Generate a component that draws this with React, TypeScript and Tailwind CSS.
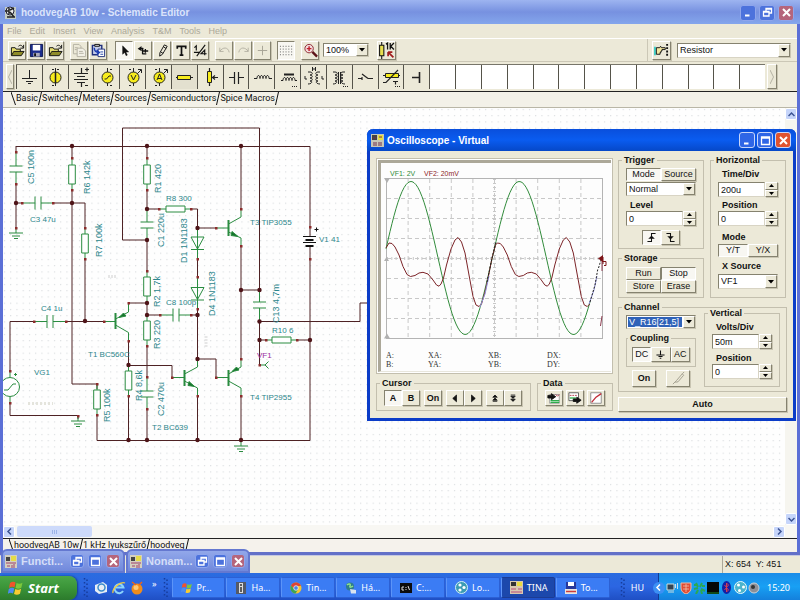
import React from 'react';
import clsx from 'clsx';

const raised =
  'border border-t-white border-l-white border-r-[#85826f] border-b-[#85826f] bg-[#ece9d8] shadow-[1px_1px_0_#c9c5b2]';
const pressed = 'border border-t-[#85826f] border-l-[#85826f] border-r-white border-b-white bg-[#f8f7f2]';
const sunken = 'border border-t-[#85826f] border-l-[#85826f] border-r-[#d8d4c4] border-b-[#d8d4c4] bg-white';

/* ---------- small controls ---------- */

type BtnProps = { label?: string; down?: boolean; className?: string; children: React.ReactNode };

function Btn({ label, down, className, children }: BtnProps) {
  return (
    <button
      type="button"
      aria-label={label}
      className={clsx('flex items-center justify-center overflow-hidden leading-none', down ? pressed : raised, className)}
    >
      {children}
    </button>
  );
}

function Combo({ id, label, value, className, selected }: { id: string; label?: string; value: string; className?: string; selected?: boolean }) {
  return (
    <div className={clsx('flex items-stretch', sunken, className)}>
      <select
        id={id}
        aria-label={label}
        className={clsx('m-px min-w-0 flex-1 appearance-none pl-px leading-none outline-none', selected && 'bg-[#2f62b8] text-white')}
      >
        <option>{value}</option>
      </select>
      <span className={clsx('flex w-3 items-center justify-center', raised)}>
        <svg width="6" height="4" viewBox="0 0 6 4">
          <path d="M0 0h6L3 3.5z" />
        </svg>
      </span>
    </div>
  );
}

function Spin({ id, label, value }: { id: string; label: string; value: string }) {
  return (
    <div className="flex h-[15px]">
      <input id={id} defaultValue={value} className={clsx('min-w-0 flex-1 pl-0.5 leading-none outline-none', sunken)} />
      <div className="flex w-[13px] flex-col">
        <Btn label={`${label} up`} className="min-h-0 flex-1">
          <svg width="5" height="3" viewBox="0 0 5 3"><path d="M0 3h5L2.5 0z" /></svg>
        </Btn>
        <Btn label={`${label} down`} className="min-h-0 flex-1">
          <svg width="5" height="3" viewBox="0 0 5 3"><path d="M0 0h5L2.5 3z" /></svg>
        </Btn>
      </div>
    </div>
  );
}

function Group({ title, className, children }: { title: string; className?: string; children: React.ReactNode }) {
  return (
    <fieldset className={clsx('min-w-0 border border-[#c3bfae]', className)}>
      <legend className="-ml-1 px-0.5 text-[9px] leading-[10px] font-bold">{title}</legend>
      {children}
    </fieldset>
  );
}

function Caption({ htmlFor, className, children }: { htmlFor: string; className?: string; children: React.ReactNode }) {
  return (
    <label htmlFor={htmlFor} className={clsx('block pl-1 leading-[10px] font-bold', className)}>
      {children}
    </label>
  );
}

function WinBtn({ kind, dim, className }: { kind: 'min' | 'max' | 'restore' | 'close'; dim?: boolean; className?: string }) {
  const bg = kind === 'close' ? (dim ? 'bg-[#b5657c]' : 'bg-[#e0532f]') : dim ? 'bg-[#4c72dc]' : 'bg-[#2f66e6]';
  return (
    <button
      type="button"
      aria-label={kind}
      className={clsx('flex items-center justify-center rounded-[3px] border', dim ? 'border-[#8fa6ec]' : 'border-[#c8d6fa]', bg, className)}
    >
      <svg width="11" height="11" viewBox="0 0 11 11" fill="none" stroke="#fff" strokeWidth="1.3">
        {kind === 'min' && <path d="M2 8.500h4.500" strokeWidth="2" />}
        {kind === 'max' && <path d="M1.500 2h8v7.500h-8zM1.500 3h8" />}
        {kind === 'restore' && <path d="M4 4V1.500h5.500V6H7.500M1.500 4.500h5.500v4.500H1.500zM1.500 5h5.500M4 2h5.500" />}
        {kind === 'close' && <path d="M2 2l7 7M9 2l-7 7" strokeWidth="2" />}
      </svg>
    </button>
  );
}

/* ---------- toolbar icons ---------- */

function Icon({ size = 15, children }: { size?: number; children: React.ReactNode }) {
  return (
    <svg width={size} height={size} viewBox="0 0 16 16" fill="none" stroke="#111" strokeWidth="1" className="shrink-0">
      {children}
    </svg>
  );
}

const icons = {
  open: (
    <Icon>
      <path d="M1.500 13V5h4l1 1.500h4.500V9" fill="#e8e070" />
      <path d="M1.500 13.500L4 9h11l-3 4.500z" fill="#8f8c28" />
      <path d="M9 3.500c2-2 4-1 5 1.500M14.500 2v3.500H11" />
    </Icon>
  ),
  save: (
    <Icon>
      <path d="M1.500 1.500h13v13h-13z" fill="#1b2c8c" stroke="#0c1650" />
      <path d="M4 2h8v6H4z" fill="#fff" stroke="none" />
      <path d="M4.500 10.500h7v4h-7z" fill="#aab" stroke="none" />
      <path d="M5.500 11h2v3h-2z" fill="#111" stroke="none" />
    </Icon>
  ),
  copy: (
    <Icon>
      <g stroke="#b3b0a2">
        <path d="M1.500 1.500h6l2 2v8h-8z" />
        <path d="M5.500 5.500h6l3 3v6h-9z" fill="#f2f0e6" />
        <path d="M3 5h3M3 7h2M7.500 9h4M7.500 11h5" />
      </g>
    </Icon>
  ),
  paste: (
    <Icon>
      <path d="M1.500 2.500h10v10h-10z" fill="#c4cce8" stroke="#20307c" strokeWidth="1.500" />
      <path d="M4 1.500h5v2H4z" fill="#ddd" />
      <path d="M7.500 6.500h7v8h-7z" fill="#fff" stroke="#20307c" />
      <path d="M3.500 5c0 3 2 5 5 5M6 7.500L9 10l-3 2.500" stroke="#1c3cb0" strokeWidth="1.500" />
      <path d="M10 9.500h3M10 12h3" stroke="#2244aa" />
    </Icon>
  ),
  arrow: <Icon><path d="M6 3v9l2.200-2 1.500 3.500 1.300-.6-1.500-3.300h3z" fill="#111" strokeWidth=".5" /></Icon>,
  junction: <Icon><path d="M3 6h5M6 4l-3 2 3 2M7 5v7M7 8.500h6M10 6.500v4M7 11.500h4" strokeWidth="1.400" /></Icon>,
  pen: <Icon><path d="M10 2l3 1.500-5 8.500-3 2 .2-3.500zM9 4l3 2M6 9.500l2.500 1.500" /></Icon>,
  text: <Icon><path d="M3.500 6V3.500h9V6M8 3.500v9M6 13h4" strokeWidth="1.800" /></Icon>,
  ratio: <Icon><path d="M1.500 5L3.500 3v5M13 2L4 14M1 10h6M12.500 13V7.500L8.500 11.500h6" strokeWidth="1.200" /></Icon>,
  undo: <Icon><path d="M3 5v4h4M3 9c3-5 9-5 10 1" stroke="#b3b0a2" /></Icon>,
  redo: <Icon><path d="M13 5v4H9M13 9c-3-5-9-5-10 1" stroke="#b3b0a2" /></Icon>,
  plus: <Icon><path d="M8 3v10M3 8h10" stroke="#a5a294" /></Icon>,
  grid: (
    <Icon>
      <path d="M1 3.500h14M1 6.500h14M1 9.500h14M1 12.500h14" strokeDasharray="1 2" stroke="#555" />
    </Icon>
  ),
  zoom: (
    <Icon>
      <circle cx="6.500" cy="6" r="4.500" fill="#f4dcdc" stroke="#8b2630" />
      <path d="M4 6h5M6.500 3.500v5" stroke="#c0202c" strokeWidth="1.500" />
      <path d="M10 9.500l5 5" strokeWidth="2.500" stroke="#5c1218" />
    </Icon>
  ),
  value: (
    <Icon size={17}>
      <path d="M3.500 0v3M3.500 13v3" />
      <path d="M1.500 3h4v10h-4z" fill="#e8e050" />
      <path d="M7.500 2L9 1v6M11.500 1v6M15 1l-3 3 3 3" strokeWidth="1.200" />
      <path d="M9.500 9.500h4M9.500 9.500v4M9.500 9.500l5 5" stroke="#a01c1c" strokeWidth="1.600" />
    </Icon>
  ),
  hand: (
    <Icon>
      <path d="M0 4h2v9H0z" fill="#3fd0c8" stroke="none" />
      <path d="M2.500 5H6l1-1.500 1 1.500h4v2H8.500v1.500h-1V10h-1v2h-4z" fill="#f3e7a0" />
      <path d="M14 1v14" strokeWidth="2" strokeDasharray="2 1.500" />
    </Icon>
  ),
};

const toolGroups: { gap: string; items: { label: string; icon: React.ReactNode; down?: boolean }[] }[] = [
  { gap: '', items: [{ label: 'Open', icon: icons.open }, { label: 'Save', icon: icons.save }, { label: 'Import', icon: icons.open }] },
  { gap: 'ml-1.5', items: [{ label: 'Copy', icon: icons.copy }, { label: 'Paste', icon: icons.paste }] },
  {
    gap: 'ml-2',
    items: [
      { label: 'Select', icon: icons.arrow, down: true },
      { label: 'Last component', icon: icons.junction },
      { label: 'Wire', icon: icons.pen },
      { label: 'Text', icon: icons.text },
      { label: 'Ratio', icon: icons.ratio },
    ],
  },
  { gap: 'ml-1.5', items: [{ label: 'Undo', icon: icons.undo }, { label: 'Redo', icon: icons.redo }, { label: 'Add', icon: icons.plus }] },
  { gap: 'ml-1.5', items: [{ label: 'Grid', icon: icons.grid, down: true }] },
  { gap: 'ml-1.5', items: [{ label: 'Zoom', icon: icons.zoom }] },
];

/* ---------- component palette ---------- */

const yellow = '#f7ec1c';

const parts: { name: string; art: React.ReactNode }[] = [
  { name: 'Ground', art: <path d="M12.500 5v8M5 13.500h15M9 16.500h7M11 18.500h3" /> },
  { name: 'Current source', art: <><path d="M12.500 3v18M9 4.500h2M14 4.500h2M9 20.500h2" /><circle cx="12.500" cy="12.500" r="5.500" fill={yellow} /><path d="M12.500 7v11" strokeWidth="1.500" /></> },
  { name: 'Battery', art: <path d="M12.500 3v5M5 8.500h14M8 11.500h8M5 14.500h14M8 17.500h8M12.500 18v4M16 4.500h4M18 2.500v4M16 20.500h3" strokeWidth="1.200" /> },
  { name: 'Generator', art: <><path d="M12.500 3v18M15 4.500h2M15 20.500h2" /><circle cx="12.500" cy="12.500" r="5.500" fill={yellow} /><path d="M9.500 14h2l2.500-3h2" /></> },
  { name: 'Voltmeter', art: <><path d="M12.500 3v4M12.500 18v3M8 4.500h2M8 20.500h2M16 9l4-4M17 4.500h3.500V8" /><circle cx="12.500" cy="12.500" r="5.500" fill={yellow} /><path d="M10 10l2.500 5 2.500-5" /></> },
  { name: 'Ammeter', art: <><path d="M12.500 3v4M12.500 18v3M8 4.500h2M8 20.500h2M16 9l4-4M17 4.500h3.500V8" /><circle cx="12.500" cy="12.500" r="5.500" fill={yellow} /><path d="M10 15l2.500-6 2.500 6M11 13.500h3" /></> },
  { name: 'Resistor', art: <><path d="M4 12.500h17" /><path d="M5.500 10.500h13v4h-13z" fill={yellow} /></> },
  { name: 'Potentiometer', art: <><path d="M11.500 3v18M15 12.500h5M17 10.500l-2.500 2 2.500 2" strokeWidth="1.200" /><path d="M9.500 6.500h4v11h-4z" fill={yellow} /></> },
  { name: 'Capacitor', art: <path d="M5 12.500h5M14 12.500h6M10.500 7v12M14.500 7v12" strokeWidth="1.200" /> },
  { name: 'Inductor', art: <path d="M4 13.500h3c0-4 3-4 3 0c0-4 3-4 3 0c0-4 3-4 3 0c0-4 3-4 3 0h3" /> },
  { name: 'Core inductor', art: <><path d="M8 9.500h10" strokeWidth="2" /><path d="M5 15.500h2c0-4 3-4 3 0c0-4 3-4 3 0c0-4 3-4 3 0c0-4 3-4 3 0h2" /><path d="M16 21.500h6" strokeDasharray="1 1" /></> },
  { name: 'Coupled inductors', art: <path d="M10.500 2v4M13.500 2v4M10.500 4h3M6 7h2c3 0 3 3 0 3c3 0 3 3 0 3c3 0 3 3 0 3c3 0 2 3-2 3M18 7h-2c-3 0-3 3 0 3c-3 0-3 3 0 3c-3 0-3 3 0 3c-3 0-2 3 2 3M3 11v3h2M20 11v3h2" /> },
  { name: 'Transformer', art: <><path d="M6 7h2c3 0 3 3 0 3c3 0 3 3 0 3c3 0 3 3 0 3c3 0 2 3-2 3M18 7h-2c-3 0-3 3 0 3c-3 0-3 3 0 3c-3 0-3 3 0 3c-3 0-2 3 2 3M11.500 7v12M13.500 7v12" /><path d="M16 21.500h6" strokeDasharray="1 1" /></> },
  { name: 'Switch', art: <path d="M5 13.500h4M9 12v3M9 9l6 4.500M15 13.500h5" strokeWidth="1.200" /> },
  { name: 'Thermistor', art: <><path d="M4 10.500h17" /><path d="M6.500 8.500h13v4h-13z" fill={yellow} /><path d="M4 17.500h3L19 5M14 16.500h5M16.500 16.500v3" strokeWidth="1.200" /><path d="M16 21.500h6" strokeDasharray="1 1" /></> },
  { name: 'Jumper', art: <path d="M7 12.500h7M14.500 7v11" strokeWidth="1.600" /> },
];

/* ---------- tabs ---------- */

function Tab({ first, children }: { first?: boolean; children: React.ReactNode }) {
  return (
    <li className="flex items-stretch">
      {first && (
        <svg width="5" height="13" viewBox="0 0 5 13" stroke="#111" fill="none"><path d="M0 0l4.500 13" /></svg>
      )}
      <a href="#" className="flex items-center leading-none">{children}</a>
      <svg width="4" height="13" viewBox="0 0 4 13" stroke="#111" fill="none"><path d="M.5 13L3.500 0" /></svg>
    </li>
  );
}

/* ---------- schematic ---------- */

const WIRE = '#4e2224';
const PART = '#2a8c40';

// closed list of wires, each one an SVG path in sheet coordinates
const wires = [
  'M16 146.500H310V227', 'M16 146V152', 'M16 184V228', 'M16 203H22M53 203H85V228M85 259V321', 'M72 146V158M72 190V384H97V389',
  'M147 240H122.500V128H259.500V290', 'M147 146V158M147 190V209M147 209H159M191 209H197.500V234', 'M147 240V271M147 303V315H160M128.500 303H147',
  'M191 315H197.500', 'M147 346V377M147 409V440', 'M97 415V440.500H310V259', 'M10 371V321.500H34M66 321.500H104', 'M10 403V415.500H78V419',
  'M128.500 340V365.500H172V377.500M128.500 396V440', 'M197.500 228H216', 'M241 146V209M241 246V359', 'M197.500 259V277M197.500 309V359H216V377.500',
  'M197.500 396V440', 'M241 396V440', 'M241 290H259.500', 'M259.500 321.500V365M259.500 321.500H360V303H367', 'M259.500 340H266M297 340H310',
];

const nodes = [
  [16, 203], [72, 146], [72, 203], [147, 146], [147, 209], [147, 240], [85, 321], [147, 303], [147, 315], [128.5, 365], [128.5, 440],
  [147, 440], [197.5, 228], [197.5, 315], [197.5, 359], [197.5, 440], [241, 146], [241, 290], [241, 440], [259.5, 290], [259.5, 321.5],
  [259.5, 340], [310, 340],
];

const pins = [
  [16, 152], [16, 184], [16, 228], [22, 203], [53, 203], [72, 158], [72, 190], [85, 228], [85, 259], [147, 158], [147, 190], [159, 209],
  [191, 209], [147, 271], [128.5, 303], [128.5, 341], [34, 321.5], [66, 321.5], [104, 321.5], [10, 371], [10, 403], [78, 416], [97, 384],
  [97, 415], [128.5, 396], [147, 346], [147, 377], [147, 409], [160, 315], [191, 315], [172, 377.5], [197.5, 396], [197.5, 259],
  [197.5, 277], [197.5, 309], [216, 228], [241, 209], [241, 246], [241, 359], [216, 377.5], [241, 396], [266, 340], [297, 340],
  [259.5, 365], [310, 227], [310, 259],
];

const resistorsV = [[72, 165], [147, 165], [85, 234], [147, 277], [147, 321], [128.5, 371], [97, 390]];
const resistorsH = [[166, 209], [272, 340]];
const capsV = [[16, 166, 152, 184], [147, 222, 210, 239], [147, 391, 377, 409], [259.5, 302, 291, 320]];
const capsH = [[35, 203, 22, 53], [47, 321.5, 34, 66], [173, 315, 160, 191]];
const grounds = [[16, 233], [78, 421], [241, 446]];

const labels: [string, number, number][] = [
  ['C3 47u', 30, 222], ['R8 300', 166, 201], ['T3 TIP3055', 250, 225], ['V1 41', 319, 242], ['C4 1u', 41, 311], ['T1 BC560C', 88, 357],
  ['VG1', 34, 375], ['C8 100p', 166, 305], ['T2 BC639', 152, 430], ['R10 6', 272, 333], ['T4 TIP2955', 250, 400],
];

const turned: [string, number, number][] = [
  ['C5 100n', 34, 184], ['R6 142k', 90, 194], ['R1 420', 161, 193], ['R7 100k', 102, 257], ['C1 220u', 164, 247], ['D1 1N1183', 187, 263],
  ['R2 1,7k', 160, 307], ['R3 220', 160, 349], ['R4 8,6k', 142, 401], ['C2 470u', 164, 416], ['R5 100k', 110, 422], ['D4 1N1183', 215, 316],
  ['C13 4,7m', 279, 323],
];

function Schematic() {
  return (
    <svg className="block h-full min-w-0 flex-1 bg-[#fefefe]" role="img" aria-label="Class AB amplifier schematic">
      <defs>
        <pattern id="dots" width="6.25" height="6.25" patternUnits="userSpaceOnUse">
          <rect x="1" y="1" width="1" height="1" fill="#cdd0d4" />
        </pattern>
      </defs>
      <rect width="100%" height="100%" fill="url(#dots)" />
      <g transform="translate(-3 -108)" fill="none">
        <g stroke={WIRE}>
          {wires.map((d) => <path key={d} d={d} />)}
        </g>

        <g stroke={PART}>
          {resistorsV.map(([x, y]) => (
            <path key={`${x}-${y}`} fill="#fff" d={`M${x} ${y - 6}v6h3.300v19h-6.600v-19h3.300M${x} ${y + 19}v6`} />
          ))}
          {resistorsH.map(([x, y]) => (
            <path key={x} fill="#fff" d={`M${x - 6} ${y}h6v-3h19v6h-19v-3M${x + 19} ${y}h6`} />
          ))}
          {capsV.map(([x, y, a, b]) => (
            <path key={`${x}-${y}`} d={`M${x} ${a}V${y}M${x - 6.5} ${y}h13M${x - 6.5} ${y + 6}h13M${x} ${y + 6}V${b}`} />
          ))}
          {capsH.map(([x, y, a, b]) => (
            <path key={x} d={`M${a} ${y}H${x}M${x} ${y - 6.5}v13M${x + 6} ${y - 6.5}v13M${x + 6} ${y}H${b}`} />
          ))}
          {grounds.map(([x, y]) => (
            <path key={x} d={`M${x} ${y - 5}v5M${x - 7} ${y}h14M${x - 4} ${y + 3}h8M${x - 2} ${y + 5.5}h4`} />
          ))}
          {/* diodes */}
          <path d="M197.500 228V259M191 237h13l-6.500 12zM191 249.500h13" />
          <path d="M197.500 277V309M191 287.500h13l-6.500 12zM191 300h13" />
          {/* transistors */}
          <path d="M104 321.500h11.500M128.500 303v9l-13 7M115.500 325l13 7.500v8" />
          <path d="M172 377.500h12M184.500 374l13-7v-8M184.500 381l13 7v8" />
          <path d="M216 228h12M228.500 224l12.500-7v-8M228.500 232l12.500 6v8" />
          <path d="M216 377.500h12M241 359v8l-12.500 7M228.500 381l12.500 7v8" />
          <path d="M115.500 313v16M184.500 370v16M228.500 220v16M228.500 370v16" strokeWidth="2" />
          <path d="M119 317.500l4.500-4.500 2.500 3zM189 381.500l5.500 5-6.500-1zM232 231.500l6 5-7-1zM232 371.500l4.500-4.500 2.500 3z" fill="#16752c" />
          {/* generator and probe */}
          <circle cx="10" cy="387" r="9.500" fill="#fff" />
          <path d="M10 371v6M10 397v6M4 390h4l5-6h3M14 374.500h3M15.500 373v3" />
          <path d="M260 365h5M268.500 361.500l-3.500 3.500 3.500 3.500" />
        </g>

        <g stroke="#111">
          <path d="M303 236.500h13M303 242.500h13" />
          <path d="M305.500 240h8M305.500 246h8" strokeWidth="2" />
          <path d="M314.500 229.500h4M316.500 227.500v4" />
          <path d="M310 227v9M310 247v12" stroke={WIRE} />
        </g>

        <g fill="#8c2c2c">
          {pins.map(([x, y]) => <rect key={`${x}-${y}`} x={x - 1} y={y - 1} width="2.500" height="2.500" />)}
        </g>
        <g fill="#4e1418">
          {nodes.map(([x, y]) => <circle key={`${x}-${y}`} cx={x} cy={y} r="2.200" />)}
        </g>

        <g fill="#2c868c" className="[font-family:'Liberation_Sans',Arial,sans-serif]">
          <g className="text-[8px]">
            {labels.map(([t, x, y]) => <text key={t} x={x} y={y}>{t}</text>)}
          </g>
          <g className="text-[9px]">
            {turned.map(([t, x, y]) => <text key={t} transform={`translate(${x} ${y}) rotate(-90)`}>{t}</text>)}
          </g>
          <text x="257" y="358" fill="#9a2ca0" className="text-[8px]">VF1</text>
        </g>
        <path d="M28 403.500h25" stroke="#e4e4dc" strokeWidth="3" strokeDasharray="2 2" />
        <path d="M108 276.500h9M206 336v12" stroke="#e6e6e6" strokeWidth="3" strokeDasharray="2 1" />
      </g>
    </svg>
  );
}

/* ---------- oscilloscope ---------- */

// one period of the second channel
const vf2: [number, number][] = [
  [389, 243], [392, 243.5], [395, 247], [399, 255], [403, 266.5], [407, 274.5], [410.5, 276.5], [415, 275.5], [419, 273],
  [423, 272.3], [428, 274], [433, 280], [436.5, 285], [439, 286.2], [441, 284], [443.5, 278], [446.5, 265], [451, 249],
  [455, 240], [458, 237.5], [461.5, 242], [465, 253], [469, 275], [473, 296.5], [476, 305], [479, 306.5], [481.5, 304],
  [485, 292], [488.5, 276], [492, 258], [495.5, 245],
];

const PERIOD = 108.3;

function vf1Path() {
  const pts: string[] = [];
  for (let x = 386; x <= 590; x += 2) {
    const y = 258 - 76.5 * Math.cos(((x - 411) / PERIOD) * 2 * Math.PI);
    pts.push(`${x},${y.toFixed(1)}`);
  }
  return pts.join(' ');
}

function vf2Path() {
  const second = vf2.map(([x, y]) => [x + PERIOD, y]).filter(([x]) => x < 593);
  return [[386, 248], ...vf2, ...second].map(([x, y]) => `${x},${y}`).join(' ');
}

function ScopeScreen() {
  const cols = Array.from({ length: 9 }, (_, i) => 386.5 + (i + 1) * 21.6);
  const rows = Array.from({ length: 7 }, (_, i) => 178.5 + (i + 1) * 20);
  return (
    <svg viewBox="381 163 230 208" className="block w-full bg-[#fdfdfd]" fill="none" role="img" aria-label="Oscilloscope screen">
      <g stroke="#c8c8c8">
        {cols.map((x) => <path key={x} d={`M${x} 179V338`} strokeDasharray="4 3" />)}
        {rows.map((y) => <path key={y} d={`M387 ${y}H602`} strokeDasharray="4 3" />)}
        <path d="M387 258.500H602" strokeWidth="3" strokeDasharray="1 3.300" />
        <path d="M494.500 179V338" strokeWidth="3" strokeDasharray="1 3" />
        <rect x="386.500" y="178.500" width="216" height="160" stroke="#b4b4b4" />
      </g>
      <path d="M384 178h6l-3 5zM384 338.500h6l-3-5zM384 261h5l-2.500-4z" fill="#b0b0b0" />
      <polyline points={vf1Path()} stroke="#328c3c" />
      <polyline points={vf2Path()} stroke="#7c2428" />
      <path d="M480 307l5-13 4-18M589 304l5-14 3-14" stroke="#9090d8" />
      <path d="M487 282l5-24 4-16M590 302l5-17 3-17M598.500 268l2.500-8" stroke="#222" strokeDasharray="2 1.500" />
      <path d="M602 259v12M602 316l-1.500 10" stroke="#8c3c50" />
      <path d="M598 258.500l5-3.500v7z" fill="#7c1418" />
      <path d="M603 257v7M602 261.500h4v4h-2" stroke="#7c1418" />
      <g className="text-[7px] [font-family:'Liberation_Sans',Arial,sans-serif]">
        <text x="390" y="176" fill="#2f8a38">VF1: 2V</text>
        <text x="424" y="176" fill="#8c2428">VF2: 20mV</text>
      </g>
      <g fill="#333" className="text-[8px] [font-family:'Liberation_Serif',serif]">
        <text x="386" y="358">A:</text>
        <text x="428" y="358">XA:</text>
        <text x="488" y="358">XB:</text>
        <text x="547" y="358">DX:</text>
        <text x="386" y="367">B:</text>
        <text x="428" y="367">YA:</text>
        <text x="488" y="367">YB:</text>
        <text x="547" y="367">DY:</text>
      </g>
    </svg>
  );
}

function ScopeControls() {
  return (
    <div className="flex flex-col">
      <div className="grid grid-cols-[86px_76px] gap-1.5">
        <div className="flex flex-col gap-1">
          <Group title="Trigger" className="px-[7px] pt-[3px] pb-[3px]">
            <div className="grid h-[13px] grid-cols-2">
              <Btn down>Mode</Btn>
              <Btn>Source</Btn>
            </div>
            <Combo id="trigger-mode" label="Trigger mode" value="Normal" className="mt-px h-3.5" />
            <Caption htmlFor="level" className="mt-1">Level</Caption>
            <div className="mt-px"><Spin id="level" label="Level" value="0" /></div>
            <div className="mt-1 flex h-[15px] justify-center">
              <Btn label="Rising edge" down className="w-[19px]">
                <Icon size={13}><path d="M3 13h5V3h5M5.500 9L8 6.500 10.500 9z" strokeWidth="1.300" /></Icon>
              </Btn>
              <Btn label="Falling edge" className="w-[19px]">
                <Icon size={13}><path d="M3 3h5v10h5M5.500 7L8 9.500 10.500 7z" strokeWidth="1.300" /></Icon>
              </Btn>
            </div>
          </Group>
          <Group title="Storage" className="px-[7px] py-1">
            <div className="grid grid-cols-2 grid-rows-[13px_13px]">
              <Btn>Run</Btn>
              <Btn down>Stop</Btn>
              <Btn>Store</Btn>
              <Btn>Erase</Btn>
            </div>
          </Group>
        </div>
        <Group title="Horizontal" className="px-[7px] pt-1">
          <Caption htmlFor="time-div">Time/Div</Caption>
          <div className="mt-[3px]"><Spin id="time-div" label="Time/Div" value="200u" /></div>
          <Caption htmlFor="h-position" className="mt-[3px]">Position</Caption>
          <div className="mt-px"><Spin id="h-position" label="Horizontal position" value="0" /></div>
          <p className="mt-1.5 pl-1 leading-[10px] font-bold">Mode</p>
          <div className="mt-0.5 grid h-[13px] grid-cols-2">
            <Btn down>Y/T</Btn>
            <Btn>Y/X</Btn>
          </div>
          <Caption htmlFor="x-source" className="mt-1">X Source</Caption>
          <Combo id="x-source" value="VF1" className="mt-[3px] h-[15px]" />
        </Group>
      </div>

      <Group title="Channel" className="mt-1 pr-1.5 pb-1 pl-[7px]">
        <div className="grid grid-cols-[70px_1fr] gap-2">
          <div className="pt-[3px]">
            <Combo id="channel" label="Channel" value="V_R16[21,5]" className="h-3.5" selected />
            <Group title="Coupling" className="mt-1 px-[5px] py-1">
              <div className="grid h-[15px] grid-cols-3">
                <Btn down>DC</Btn>
                <Btn label="Ground">
                  <Icon size={13}><path d="M8 3v5M3 8.500h10M5.500 10.500h5M7 12.500h2" strokeWidth="1.300" /></Icon>
                </Btn>
                <Btn>AC</Btn>
              </div>
            </Group>
            <div className="mt-[3px] flex h-[17px] justify-between px-1.5">
              <Btn className="w-6 font-bold">On</Btn>
              <Btn label="Probe" className="w-6">
                <Icon size={15}><path d="M2 14l4-4 6-7 1.500 1.500-6 7-3 .5M12 3l2-2" stroke="#a19e8e" /></Icon>
              </Btn>
            </div>
          </div>
          <Group title="Vertical" className="-mt-1 px-[7px] pt-1 pb-1.5">
            <Caption htmlFor="volts-div">Volts/Div</Caption>
            <div className="mt-0.5"><Spin id="volts-div" label="Volts/Div" value="50m" /></div>
            <Caption htmlFor="v-position" className="mt-1">Position</Caption>
            <div className="mt-px"><Spin id="v-position" label="Vertical position" value="0" /></div>
          </Group>
        </div>
      </Group>
      <Btn className="mt-[5px] h-[15px] font-bold">Auto</Btn>
    </div>
  );
}

function Oscilloscope() {
  return (
    <section className="absolute top-[129px] left-[367px] w-[429px] rounded-t-md border-3 border-t-0 border-[#0b3cc8] bg-[#ece9d8] text-[9px]">
      <header className="-mx-[3px] flex h-[22px] items-center rounded-t-md bg-linear-to-b from-[#0a4fdc] via-[#0a5cf0] to-[#0648c8] pr-[5px] pl-1">
        <svg width="13" height="13" viewBox="0 0 13 13">
          <rect width="13" height="13" fill="#c8c8b8" />
          <path d="M1 1h5v5H1z" fill="#444" />
          <path d="M7 1h5v5H7z" fill="#e8e040" />
          <path d="M2 4h3M8 3h3M2 9h4M8 8v4M10 8v4M2 11h4" stroke="#703050" />
        </svg>
        <h2 className="pl-[3px] text-[10px] font-bold text-white">Oscilloscope - Virtual</h2>
        <div className="ml-auto flex gap-0.5">
          <WinBtn kind="min" className="size-4" />
          <WinBtn kind="max" className="size-4" />
          <WinBtn kind="close" className="size-4" />
        </div>
      </header>
      <div className="grid grid-cols-[237px_1fr] gap-[5px] px-1.5 pt-1 pb-1.5">
        <div className="flex flex-col gap-1 pt-[3px]">
          <div className="border border-[#c3bfae] bg-white p-px">
            <div className="border-t-3 border-b border-l-3 border-t-[#aca899] border-b-[#e8e6dc] border-l-[#aca899]">
              <ScopeScreen />
            </div>
          </div>
          <div className="flex gap-1.5">
            <Group title="Cursor" className="flex-1 px-[7px] pt-0.5 pb-1">
              <div className="flex h-4 font-bold">
                <Btn down className="w-[18px]">A</Btn>
                <Btn className="w-[18px]">B</Btn>
                <Btn className="ml-1 w-[18px]">On</Btn>
                <Btn label="Cursor left" className="ml-1 w-[18px]"><Icon size={12}><path d="M10 4v9L5 8.500z" fill="#111" /></Icon></Btn>
                <Btn label="Cursor right" className="w-[18px]"><Icon size={12}><path d="M6 4v9l5-4.500z" fill="#111" /></Icon></Btn>
                <Btn label="Cursor up" className="ml-1 w-[18px]"><Icon size={12}><path d="M8 4l3 3H5zM8 8l3 3H5zM5 12.500h6" fill="#111" /></Icon></Btn>
                <Btn label="Cursor down" className="w-[18px]"><Icon size={12}><path d="M8 8.500l-3-3h6zM8 12.500l-3-3h6zM5 4h6" fill="#111" /></Icon></Btn>
              </div>
            </Group>
            <Group title="Data" className="w-[76px] px-[7px] pt-0.5 pb-1">
              <div className="flex h-4 justify-between">
                <Btn label="Import data" className="w-[18px]">
                  <Icon size={14}>
                    <path d="M3 4h11v10H3z" fill="#fff" stroke="#999" />
                    <path d="M4 11h10M4 13h10" stroke="#2fae4c" strokeWidth="1.500" />
                    <path d="M1 5h4V3l5 3.500L5 10V8H1z" fill="#111" />
                    <path d="M10 4l2 2 2-2" stroke="#b03040" />
                  </Icon>
                </Btn>
                <Btn label="Export data" className="w-[18px]">
                  <Icon size={14}>
                    <path d="M1 2h11v9H1z" fill="#fff" stroke="#555" />
                    <path d="M2 5h9" stroke="#b03040" strokeDasharray="2 1" />
                    <path d="M2 8h7" stroke="#2fae4c" strokeWidth="1.500" />
                    <path d="M6 9h4V7l5 3.500-5 3.500v-2H6z" fill="#111" />
                  </Icon>
                </Btn>
                <Btn label="Draw chart" className="w-[18px]">
                  <Icon size={14}>
                    <path d="M2 2h12v12H2z" fill="#fff" stroke="#888" />
                    <path d="M3 13l5-6 6-4" stroke="#c02c38" strokeWidth="1.500" />
                  </Icon>
                </Btn>
              </div>
            </Group>
          </div>
        </div>
        <ScopeControls />
      </div>
    </section>
  );
}

/* ---------- scroll bars ---------- */

function ScrollBtn({ label, d }: { label: string; d: string }) {
  return (
    <button type="button" aria-label={label} className="flex size-3 shrink-0 items-center justify-center rounded-xs border border-white bg-[#c6d5fa]">
      <svg width="7" height="7" viewBox="0 0 7 7" fill="none" stroke="#3c5494" strokeWidth="1.500"><path d={d} /></svg>
    </button>
  );
}

/* ---------- editor window ---------- */

const menu = ['File', 'Edit', 'Insert', 'View', 'Analysis', 'T&M', 'Tools', 'Help'];
const categories = ['Basic', 'Switches', 'Meters', 'Sources', 'Semiconductors', 'Spice Macros'];

function Editor() {
  return (
    <main className="flex min-h-0 flex-1 flex-col border-x-3 border-[#5b6fd6] bg-[#ece9d8]">
      <header className="-mx-[3px] flex h-6 shrink-0 items-center bg-linear-to-b from-[#9db4f0] via-[#7791e0] to-[#84a6ec] pt-px pr-1.5 pl-1">
        <svg width="13" height="14" viewBox="0 0 13 14">
          <path d="M1 1h11v12H1z" fill="#c4ccc4" />
          <circle cx="6" cy="5" r="4" fill="#eee" stroke="#223" />
          <path d="M1 5h4M5 2v6M6 4l4-2M6 6l4 5M3 11h8" stroke="#222" strokeWidth="1.500" />
        </svg>
        <h1 className="pl-1 text-[10px] font-bold text-[#dbe4fb]">hoodvegAB 10w - Schematic Editor</h1>
        <div className="ml-auto flex gap-[3px]">
          <WinBtn kind="min" dim className="size-4" />
          <WinBtn kind="restore" dim className="size-4" />
          <WinBtn kind="close" dim className="size-4" />
        </div>
      </header>

      <nav className="flex h-[15px] shrink-0 items-center gap-2 border-b border-white pl-1 text-[9px] leading-none text-[#aba899]">
        {menu.map((m) => <a key={m} href="#">{m}</a>)}
      </nav>

      <div className="flex h-[23px] shrink-0 items-center border-b border-[#cbc7b6] pr-1.5 pl-[5px] text-[9px]">
        {toolGroups.map((g) => (
          <div key={g.items[0].label} className={clsx('flex gap-px', g.gap)}>
            {g.items.map((t) => (
              <Btn key={t.label} label={t.label} down={t.down} className="h-[19px] w-[18px]">{t.icon}</Btn>
            ))}
          </div>
        ))}
        <Combo id="zoom" label="Zoom" value="100%" className="ml-1 h-3.5 w-[46px]" />
        <Btn label="Component value" className="ml-2 h-[19px] w-[19px]">{icons.value}</Btn>
        <div className="ml-auto flex h-full items-center gap-1.5 border-l border-[#cbc7b6] pl-1">
          <Btn label="Find component" className="h-[19px] w-[19px]">{icons.hand}</Btn>
          <Combo id="part" label="Component" value="Resistor" className="h-[15px] w-[114px]" />
        </div>
      </div>

      <div className="flex h-[29px] shrink-0 gap-0.5 py-0.5 pr-5 pl-[3px]">
        <Btn label="Scroll left" className="w-2"><svg width="4" height="16" viewBox="0 0 4 16" fill="none" stroke="#b5b2a4"><path d="M4 1L.5 8 4 15" /></svg></Btn>
        <div className="grid flex-1 grid-cols-[repeat(29,minmax(0,1fr))] border-t border-[#77756a]">
          {parts.map((p) => (
            <button
              key={p.name}
              type="button"
              aria-label={p.name}
              className={clsx(
                'flex items-center justify-center overflow-hidden border-l border-[#55534a]',
                p.name === 'Resistor' ? 'bg-[#e3e0cf]' : 'bg-[#ece9d8]',
              )}
            >
              <svg width="24" height="24" viewBox="0 0 24 24" fill="none" stroke="#222" className="shrink-0">{p.art}</svg>
            </button>
          ))}
          {Array.from({ length: 13 }, (_, i) => (
            <div key={i} className="border-l border-[#55534a] bg-white" />
          ))}
        </div>
        <Btn label="Scroll right" className="w-2.5"><svg width="4" height="16" viewBox="0 0 4 16" fill="none" stroke="#b5b2a4"><path d="M0 1l3.500 7L0 15" /></svg></Btn>
      </div>

      <ul className="flex h-[17px] shrink-0 items-start border-t border-b border-t-[#222] border-b-[#b9b6a6] bg-[#f3f1e8] pl-2 text-[9px] [font-family:Roboto,sans-serif]">
        {categories.map((c, i) => <Tab key={c} first={i === 0}>{c}</Tab>)}
      </ul>

      <div className="flex min-h-0 flex-1">
        <Schematic />
        <div className="flex w-3 shrink-0 flex-col justify-between bg-[#f6f5ef]">
          <ScrollBtn label="Scroll up" d="M.5 5l3-3 3 3" />
          <ScrollBtn label="Scroll down" d="M.5 2l3 3 3-3" />
        </div>
      </div>

      <div className="flex h-[13px] shrink-0 items-center bg-[#f8f7f3] pr-3">
        <ScrollBtn label="Scroll sheet left" d="M5 .5l-3 3 3 3" />
        <div className="ml-0.5 flex h-[11px] w-[75px] items-center justify-center gap-px rounded-xs bg-[#cddafb]">
          <i className="h-1 w-px bg-[#9db4e8]" />
          <i className="h-1 w-px bg-[#9db4e8]" />
          <i className="h-1 w-px bg-[#9db4e8]" />
        </div>
        <div className="ml-auto"><ScrollBtn label="Scroll sheet right" d="M2 .5l3 3-3 3" /></div>
      </div>

      <ul className="flex h-3.5 shrink-0 border-t border-[#222] bg-[#f5f2ec] pl-1.5 text-[9px] [font-family:Roboto,sans-serif]">
        <Tab first>hoodvegAB 10w</Tab>
        <Tab>1 kHz lyukszűrő</Tab>
        <Tab>hoodveg</Tab>
      </ul>
      <div className="-mx-[3px] h-1 shrink-0 border-b border-[#c5c8e0] bg-[#6270c8]" />
    </main>
  );
}

function MiniWindow({ title }: { title: string }) {
  return (
    <div className="flex h-6 w-[124px] items-center rounded-t-md border-2 border-[#6478d0] bg-linear-to-b from-[#92a8ea] to-[#7189dc] pr-[3px] pl-0.5">
      <svg width="12" height="13" viewBox="0 0 12 13">
        <rect width="12" height="13" fill="#d4d0c0" />
        <path d="M1 2h4v4H1z" fill="#444" />
        <path d="M6 1h5v5H6z" fill="#e4dc48" />
        <path d="M1 8h10M2 11h3M7 10v3M9 9v4" stroke="#a0406c" />
      </svg>
      <span className="pl-1 text-[11px] leading-none font-bold text-[#d5def8]">{title}</span>
      <div className="ml-auto flex gap-1">
        <WinBtn kind="restore" dim className="size-3.5" />
        <WinBtn kind="max" dim className="size-3.5" />
        <WinBtn kind="close" dim className="size-3.5" />
      </div>
    </div>
  );
}

/* ---------- taskbar ---------- */

function WinFlag({ size }: { size: number }) {
  return (
    <svg width={size} height={size} viewBox="0 0 16 16">
      <path d="M2 3c2-1.500 4-1.500 5.500-.5L6.500 7.500C5 6.500 3 6.500 1 8z" fill="#f0542c" />
      <path d="M8.500 3c2 1 4 1 6-.3l-1.200 5c-2 1.300-4 1.300-5.800.3z" fill="#7cc83c" />
      <path d="M.8 9c2-1.500 4-1.500 5.500-.5L5 13.500c-1.500-1-3.500-1-5.300.5z" fill="#4c8cf0" />
      <path d="M7.300 9c2 1 4 1 5.800-.3L12 13.700c-2 1.300-4 1.300-6 .3z" fill="#f8cc30" />
    </svg>
  );
}

const tasks: { name: string; icon: React.ReactNode; active?: boolean }[] = [
  { name: 'Pr...', icon: <WinFlag size={12} /> },
  { name: 'Ha...', icon: <svg width="12" height="12" viewBox="0 0 12 12"><path d="M1 0h10v12H1z" fill="#555a66" /><path d="M4 1h4v10H4z" fill="#ddd" /><path d="M6 2v2M6 5v5" stroke="#333" strokeWidth="1.500" /></svg> },
  { name: 'Tin...', icon: <svg width="12" height="12" viewBox="0 0 12 12"><circle cx="6" cy="6" r="5.500" fill="#f4c430" /><path d="M1 3.500A5.500 5.500 0 0 1 11 4H6L4 7z" fill="#dc4434" /><path d="M1 3.500A5.500 5.500 0 0 0 5.500 11.500L8 7.500 4 7z" fill="#3ca454" /><circle cx="6" cy="6" r="2.300" fill="#4884e8" stroke="#fff" strokeWidth=".7" /></svg> },
  { name: 'Há...', icon: <svg width="12" height="12" viewBox="0 0 12 12"><circle cx="5" cy="4.500" r="4" fill="#2f7c8c" /><path d="M2 3c2-2 4-1 3 1s2 1 3 0" stroke="#8fe08c" strokeWidth="1.500" fill="none" /><path d="M5 7l6 1v3.500H6z" fill="#d8e4f0" /></svg> },
  { name: 'C:...', icon: <svg width="12" height="10" viewBox="0 0 12 10"><path d="M0 0h12v10H0z" fill="#0c0c0c" /><path d="M4 4H2v3h2M6 4v1M6 6v1M8 3l1.500 4" stroke="#ddd" fill="none" /></svg> },
  { name: 'Lo...', icon: <svg width="13" height="13" viewBox="0 0 13 13"><circle cx="6.500" cy="6.500" r="6" fill="#3c9cb4" stroke="#d4f0f4" /><circle cx="5" cy="4" r="1.600" fill="#fff" /><circle cx="9" cy="6.500" r="1.600" fill="#fff" /><circle cx="5" cy="9" r="1.600" fill="#fff" /></svg> },
  { name: 'TINA', active: true, icon: <svg width="13" height="13" viewBox="0 0 13 13"><path d="M0 0h13v13H0z" fill="#d8c8b0" /><path d="M1 1h5v4H1z" fill="#333" /><path d="M7 1h5v4H7z" fill="#e8dc40" /><path d="M1 8h5M8 8h4M1 11h11" stroke="#b84c7c" /></svg> },
  { name: 'To...', icon: <svg width="12" height="12" viewBox="0 0 12 12"><path d="M1 0h10v7H1z" fill="#26389c" /><path d="M3 0h6v4H3z" fill="#fff" /><path d="M0 7h12v5H0z" fill="#e8e4e0" /><path d="M1 9.500h10" stroke="#cc3c3c" strokeWidth="1.500" /></svg> },
];

function Grip() {
  return (
    <svg width="5" height="20" viewBox="0 0 5 20" fill="none" stroke="#163c9c" strokeWidth="1.500">
      <path d="M1.500 0v20M4 1.500v20" strokeDasharray="1.500 2.500" />
    </svg>
  );
}

function Taskbar() {
  return (
    <footer className="flex h-[27px] shrink-0 items-stretch bg-linear-to-b from-[#2a6ce0] via-[#2c66e2] to-[#1f4fc4] text-[9px] text-white [font-family:'Noto_Sans',sans-serif]">
      <button type="button" className="mt-[3px] flex w-[77px] items-center rounded-r-lg bg-linear-to-b from-[#4ba648] via-[#3a9438] to-[#2c7a2c] pl-2 shadow-[1px_0_2px_#123c8c]">
        <WinFlag size={16} />
        <span className="pl-1 text-[13px] leading-none font-bold italic">Start</span>
      </button>
      <div className="mt-0.5 flex items-center pl-1.5">
        <Grip />
        <svg width="14" height="14" viewBox="0 0 14 14" className="ml-1.5">
          <path d="M1 4l8-3 4 3v7l-8 2-4-3z" fill="#e8eef4" />
          <circle cx="7.500" cy="6.500" r="3.500" fill="none" stroke="#3c8ccc" strokeWidth="1.500" />
        </svg>
        <svg width="14" height="14" viewBox="0 0 14 14" className="ml-1" fill="none">
          <path d="M11 10a4.500 4.500 0 1 1 .5-3.500H4" stroke="#8cd4fc" strokeWidth="2" />
          <path d="M1 12C0 8 8 0 13 2" stroke="#f4cc3c" strokeWidth="1.300" />
        </svg>
        <svg width="14" height="14" viewBox="0 0 14 14" className="ml-1">
          <circle cx="7" cy="8" r="5.500" fill="#f08c1c" />
          <circle cx="6" cy="6.500" r="2.500" fill="#fcc878" />
          <path d="M2 1l4 3M12 1L9 4" stroke="#e8641c" strokeWidth="1.500" />
        </svg>
        <span className="ml-2 self-start pt-0.5">»</span>
        <span className="ml-1.5"><Grip /></span>
      </div>
      <div className="mt-0.5 ml-1 flex max-w-[438px] min-w-0 flex-1 gap-px">
        {tasks.map((t) => (
          <button
            key={t.name}
            type="button"
            className={clsx(
              'my-0.5 flex min-w-0 flex-1 items-center gap-1 rounded-xs border border-l-[#5c94f8] pl-2 leading-none',
              t.active ? 'border-[#1c3c94] bg-[#1c48ac]' : 'border-[#2c60d4] bg-[#3b7cf4]',
            )}
          >
            {t.icon}
            {t.name}
          </button>
        ))}
      </div>
      <div className="mt-0.5 ml-auto flex items-center pr-[14px] pl-2">
        <Grip />
        <span className="pl-1.5">HU</span>
      </div>
      <div className="flex items-center gap-px border-l border-[#123c94] bg-linear-to-b from-[#1a8ce8] via-[#18a0f4] to-[#1480dc] pt-0.5 pr-2.5">
        <button type="button" aria-label="Show hidden icons" className="-ml-1.5 flex size-3 items-center justify-center rounded-full bg-[#3c90f4]">
          <svg width="7" height="7" viewBox="0 0 7 7" fill="none" stroke="#fff" strokeWidth="1.500"><path d="M5 .5l-3 3 3 3" /></svg>
        </button>
        <svg width="13" height="12" viewBox="0 0 13 12" fill="none"><path d="M1 2h7v6H1z" fill="#345" stroke="#cdd" /><path d="M2 10h6" stroke="#cdd" /><path d="M9.500 2v4M11.500 1v6" stroke="#cde" /></svg>
        <svg width="12" height="12" viewBox="0 0 12 12"><path d="M1 1h10v5c0 3-2 5-5 6-3-1-5-3-5-6z" fill="#e04c34" stroke="#f4b8a0" /><path d="M3 4h6M3 7h6M6 2v8" stroke="#f8d0b8" strokeWidth=".7" /></svg>
        <svg width="13" height="12" viewBox="0 0 13 12" fill="none" stroke="#2ca850" strokeWidth="2"><path d="M3 1l2 4M9 1L7 5M1 7l4-1M8 7l4 2M5 8l-2 4M8 8l1 4M1 3h3M9 4h3" /></svg>
        <svg width="12" height="12" viewBox="0 0 12 12"><path d="M0 0h12v12H0z" fill="#050805" /><path d="M0 11h12" stroke="#1c8c2c" /></svg>
        <svg width="13" height="13" viewBox="0 0 13 13"><ellipse cx="6.500" cy="6.500" rx="4.500" ry="6.500" fill="#1420a4" /><path d="M4.500 4l4 5-2 2V2l2 2-4 5" stroke="#d43c54" fill="none" /></svg>
        <svg width="13" height="13" viewBox="0 0 13 13"><circle cx="6.500" cy="6.500" r="6" fill="#4cb4cc" stroke="#e4f8fc" /><circle cx="4.500" cy="4" r="1.500" fill="#fff" /><circle cx="9.500" cy="6" r="1.500" fill="#fff" /><circle cx="5.500" cy="9.500" r="1.500" fill="#fff" /></svg>
        <svg width="12" height="12" viewBox="0 0 12 12"><circle cx="6" cy="6" r="5" fill="#8c9098" stroke="#ccd0d4" /><circle cx="5" cy="5" r="2" fill="#333" /></svg>
        <time className="ml-1.5">15:20</time>
      </div>
    </footer>
  );
}

export default function App() {
  return (
    <div className="relative flex h-screen w-full flex-col overflow-hidden bg-[#ece9d8] text-[9px] text-[#111] [font-family:'Liberation_Sans',Arial,sans-serif]">
      <Editor />
      <div className="flex h-[17px] shrink-0 items-stretch justify-end bg-[#ece9d8]">
        <p className="w-[78px] border-l border-[#aca899] pl-0.5 leading-4 whitespace-pre">X: 654  Y: 451</p>
      </div>
      <Taskbar />
      <div className="absolute bottom-[27px] left-px flex gap-px">
        <MiniWindow title="Functi..." />
        <MiniWindow title="Nonam..." />
      </div>
      <Oscilloscope />
    </div>
  );
}
